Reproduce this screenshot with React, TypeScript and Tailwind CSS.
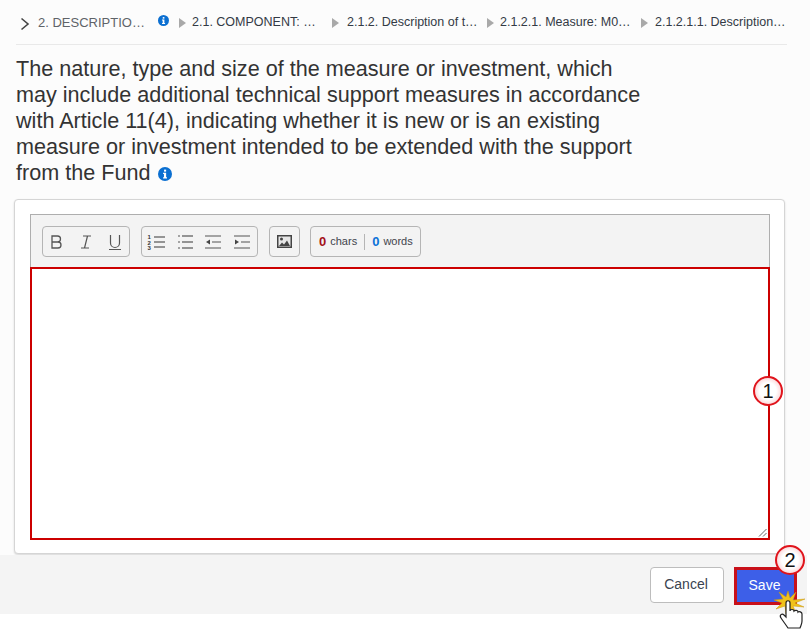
import React from "react";

const Info = ({ size, className }: { size: number; className?: string }) => (
  <svg width={size} height={size} viewBox="0 0 16 16" className={className}>
    <circle cx="8" cy="8" r="8" fill="#0b6fd1" />
    <rect x="6.9" y="3" width="2.4" height="2.3" fill="#fff" />
    <path d="M5.8 6.7h3.5v5h1v1.4H5.8v-1.4h1v-3.6h-1z" fill="#fff" />
  </svg>
);

const Tri = () => (
  <svg width="7" height="10" viewBox="0 0 7 10" className="shrink-0">
    <path d="M0 0l7 5-7 5z" fill="#a9a9a9" />
  </svg>
);

const Lines = ({ ys, x1 = 8, x2 = 19 }: { ys: number[]; x1?: number; x2?: number }) => (
  <>
    {ys.map((y) => (
      <path key={y} d={`M${x1} ${y}H${x2}`} stroke="#555" strokeWidth="1.2" />
    ))}
  </>
);

const Ico = ({ children }: { children: React.ReactNode }) => (
  <svg width="20" height="20" viewBox="0 0 20 20" fill="none" className="shrink-0">
    {children}
  </svg>
);

const Callout = ({ n, className }: { n: string; className: string }) => (
  <div
    className={`absolute flex h-[30px] w-[30px] items-center justify-center rounded-full border-[2px] border-[#e0141c] bg-[radial-gradient(circle,#ffffff_45%,#f7b4b7_100%)] text-[20px] text-[#111] ${className}`}
  >
    {n}
  </div>
);

const groupCls = "flex h-[31px] items-center rounded-[4px] border border-[#b5b5b5]";

export default function App() {
  return (
    <div className="relative h-[631px] w-[810px] overflow-hidden bg-white font-['Liberation_Sans',Arial,sans-serif]">
      <div className="h-[555px] bg-[#fcfcfc] pl-[14px] pr-[25px]">
        <div className="-mr-[2px] ml-[2px] flex h-[45px] items-center whitespace-nowrap border-b border-[#e9e9e9] pb-[2px] pt-[3px] text-[12.5px] text-[#333a45]">
          <svg width="12" height="14" viewBox="0 0 12 14" fill="none" className="ml-[3px] mr-[7px] mt-[3px] shrink-0">
            <path d="M2.5 1.5L9 7l-6.500 5.500" stroke="#444" strokeWidth="1.600" />
          </svg>
          <span className="w-[110px] text-[13px] text-[#5f6368]">2. DESCRIPTIO…</span>
          <Info size={11} className="mb-[4px] ml-[10px] mr-[10px] shrink-0" />
          <Tri />
          <span className="ml-[6px] w-[140px]">2.1. COMPONENT: …</span>
          <Tri />
          <span className="ml-[8px] w-[140px]">2.1.2. Description of t…</span>
          <Tri />
          <span className="ml-[6px] w-[141px]">2.1.2.1. Measure: M0…</span>
          <Tri />
          <span className="ml-[7px]">2.1.2.1.1. Description…</span>
        </div>
        <div className="ml-[2px] mt-[11px] w-[640px] text-[21.6px] leading-[26px] text-[#333]">
          The nature, type and size of the measure or investment, which may include additional technical support measures in accordance with Article 11(4), indicating whether it is new or is an existing measure or investment intended to be extended with the support from the Fund
          <Info size={14} className="ml-[8px] inline-block align-[-1px]" />
        </div>
        <div className="mt-[13px] h-[355px] rounded-[4px] border border-[#d5d5d5] bg-white pl-[15px] pr-[14px] pt-[14px] shadow-[0_1px_2px_rgba(0,0,0,0.15)]">
          <div className="flex h-[53px] items-center gap-[11px] border border-b-0 border-[#aeaeae] bg-[#f3f3f3] pl-[11px] pt-[1px]">
            <div className={`${groupCls} w-[88px] justify-between px-[4px] text-[#555]`}>
              <Ico>
                <path d="M5 4h5.500a3 3 0 010 6H5zm0 6h6a3 3 0 010 6H5z" stroke="#555" strokeWidth="1.300" />
              </Ico>
              <Ico>
                <path d="M7 4h8M5 16h8M11.500 4L8.500 16" stroke="#555" strokeWidth="1.200" />
              </Ico>
              <Ico>
                <path d="M5.500 3v8a4.500 4.500 0 009 0V3M4 17.500h12" stroke="#555" strokeWidth="1.200" />
              </Ico>
            </div>
            <div className={`${groupCls} w-[117px] justify-between pl-[4px] pr-[5px]`}>
              <Ico>
                <Lines ys={[5, 10, 15]} x1={8} x2={19} />
                <text x="1.500" y="7" fontSize="6" fontWeight="700" fill="#333">1</text>
                <text x="1.500" y="12.500" fontSize="6" fontWeight="700" fill="#333">2</text>
                <text x="1.500" y="18" fontSize="6" fontWeight="700" fill="#333">3</text>
              </Ico>
              <Ico>
                <Lines ys={[4, 10, 16]} x1={7} x2={18} />
                <Lines ys={[4, 10, 16]} x1={3} x2={5} />
              </Ico>
              <Ico>
                <path d="M2 4h16M9 10h9M2 16h16" stroke="#555" strokeWidth="1.200" />
                <path d="M7 7.500v5L3 10z" fill="#444" />
              </Ico>
              <Ico>
                <path d="M2 4h16M9 10h9M2 16h16" stroke="#555" strokeWidth="1.200" />
                <path d="M3 7.500v5L7 10z" fill="#444" />
              </Ico>
            </div>
            <div className={`${groupCls} w-[31px] justify-center`}>
              <svg width="15" height="13" viewBox="0 0 15 13" className="shrink-0">
                <rect x="0.750" y="0.750" width="13.500" height="11.500" fill="#e6e6e6" stroke="#444" strokeWidth="1.500" />
                <circle cx="4.500" cy="4" r="1.500" fill="#444" />
                <path d="M2 11l3-3.500 2 2 3-4L13 11z" fill="#444" />
              </svg>
            </div>
            <div className={`-ml-[1px] ${groupCls} w-[111px] items-center pl-[8px] text-[11px] text-[#3f444c]`}>
              <span className="text-[13px] font-bold text-[#a3121a]">0</span>
              <span className="ml-[4px]">chars</span>
              <span className="mx-[7px] h-[16px] w-px bg-[#b5b5b5]" />
              <span className="text-[13px] font-bold text-[#0b72d8]">0</span>
              <span className="ml-[4px]">words</span>
            </div>
          </div>
          <div className="relative h-[273px] border-[2px] border-[#cc0000] bg-white">
            <svg width="9" height="9" viewBox="0 0 9 9" className="absolute bottom-[1px] right-[1px]">
              <path d="M1 8.500L8.500 1M5 8.500L8.500 5" stroke="#666" strokeWidth="1" />
            </svg>
          </div>
        </div>
      </div>
      <div className="flex h-[59px] w-[807px] items-start justify-end gap-[10px] bg-[#f4f4f4] pr-[10px] pt-[12px]">
        <button className="h-[36px] w-[74px] rounded-[4px] border border-[#bdbdbd] bg-white pb-[2px] pr-[2px] text-[14px] text-[#3a4350]">Cancel</button>
        <button className="h-[38px] w-[63px] border-[3px] border-[#c8101a] bg-[#3d5fe8] pb-[2px] pr-[2px] text-[14px] text-white">Save</button>
      </div>
      <Callout n="1" className="left-[753px] top-[376px]" />
      <Callout n="2" className="left-[775px] top-[545px]" />
      <svg width="40" height="50" viewBox="0 0 40 50" className="absolute left-[770px] top-[581px]">
        <path
          d="M18 10l2 7 6-6-3 8 12-1-10 4 9 4-11-1 3 7-7-6-3 7-1-8-9 3 6-6-8-3 9-1-4-7 7 5z"
          fill="#f1c21b"
          stroke="#c9960c"
          strokeWidth="0.500"
        />
        <path
          d="M16 22c0-3 4-3 4 0v8c0-2 4-2 4 0 1-1 4-1 4 1 1-1 4 0 4 2v7c0 3-1 4-2 7H18c-2-3-5-7-7-10-2-3 1-5 3-3l2 2z"
          fill="#fff"
          stroke="#222"
          strokeWidth="1.200"
        />
      </svg>
    </div>
  );
}
